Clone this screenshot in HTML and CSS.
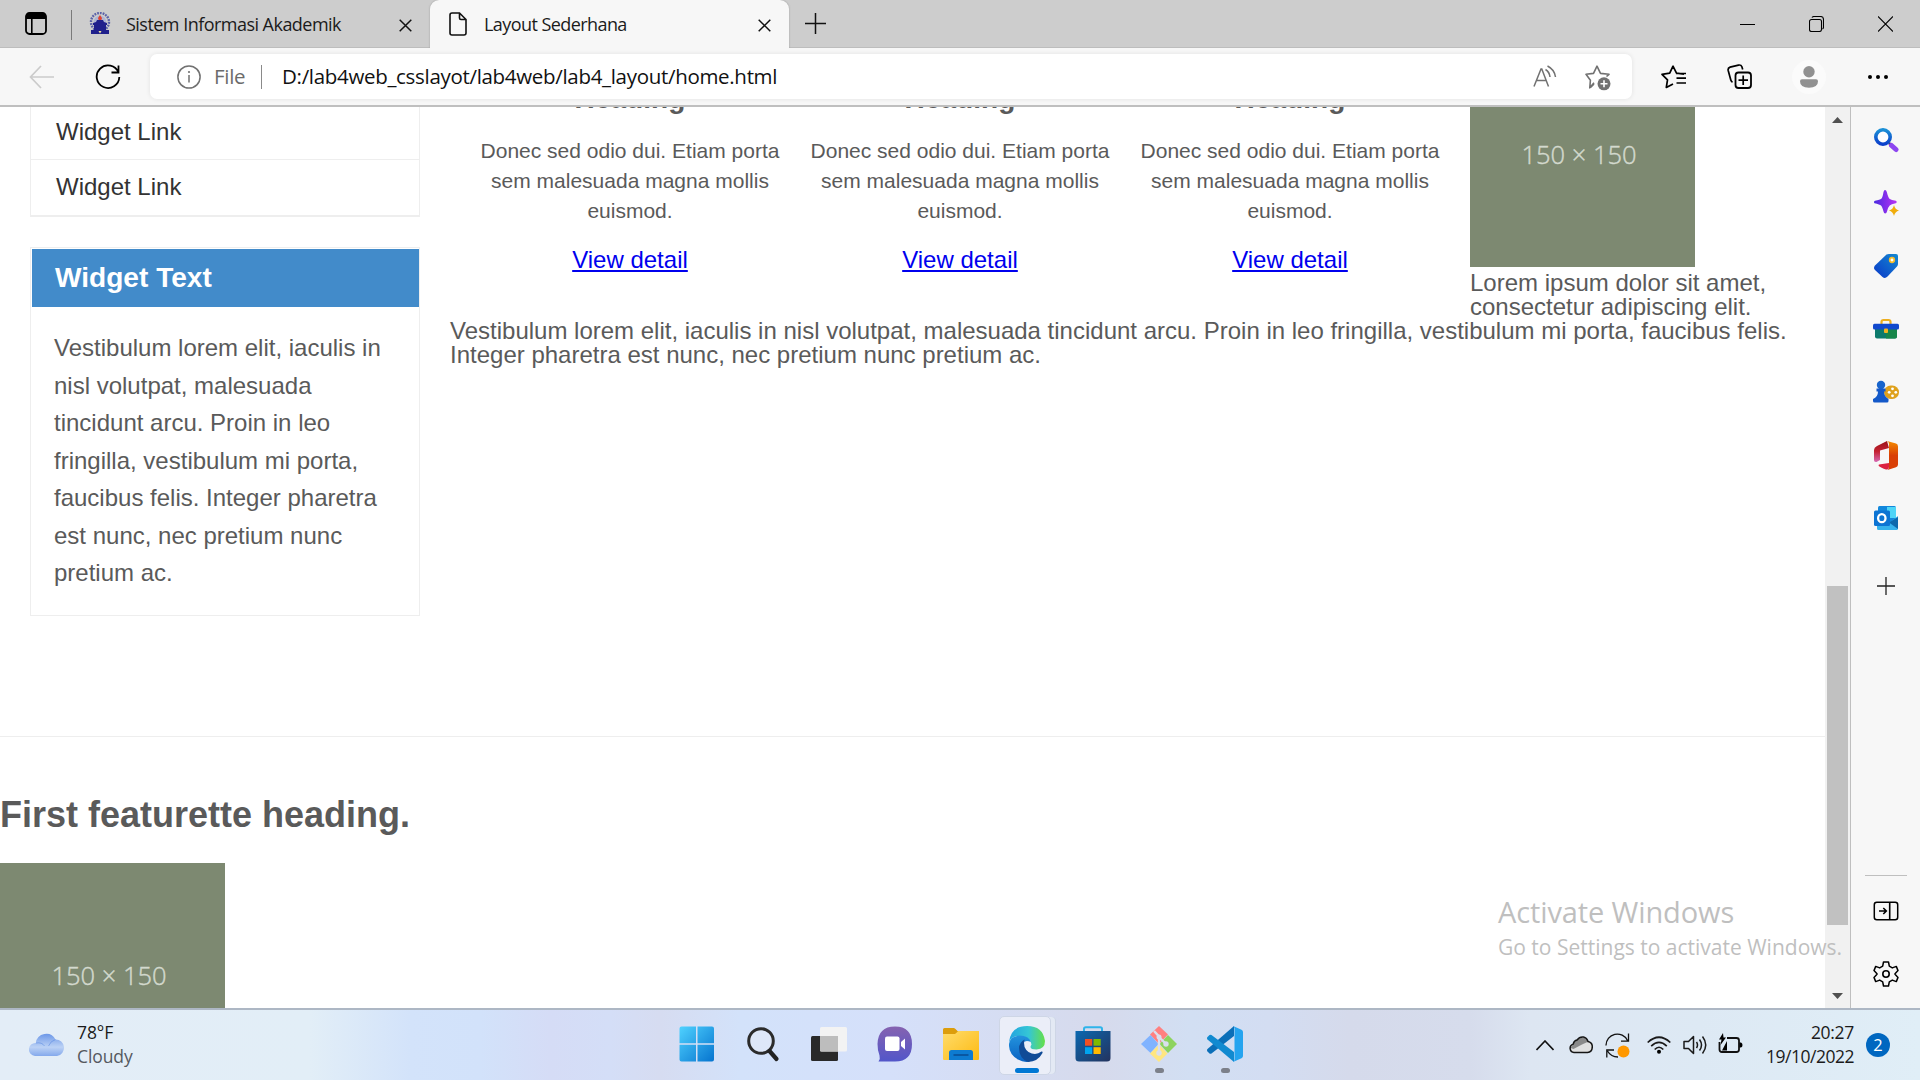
FILE: index.html
```html
<!DOCTYPE html>
<html lang="id">
<head>
<meta charset="utf-8">
<title>Layout Sederhana</title>
<link rel="stylesheet" href="styles.css">
</head>
<body>
<header class="titlebar">
  <svg class="tab-menu" width="22" height="23" viewBox="0 0 22 23"><rect x="1" y="1" width="20" height="21" rx="3.5" fill="none" stroke="#000" stroke-width="1.8"/><path d="M1 7V4a3 3 0 0 1 3-3h14a3 3 0 0 1 3 3v3zM6 7h1.6v15H6z"/></svg>
  <span class="title-rule"></span>
  <div class="tab">
    <svg class="favicon" width="22" height="23" viewBox="0 0 22 23"><circle cx="11" cy="10" r="9" fill="none" stroke="#5a62a8" stroke-width="2.4" stroke-dasharray="1.8 1"/><circle cx="11" cy="10" r="6.3" fill="#aeb4d4"/><path d="M11 3l2 3-1 3h-2L9 6z" fill="#e0412f"/><path d="M4 11l3-1 1-2h6l1 2 3 1v2h-1v5h3v4H2v-4h3v-5H4z" fill="#20208c"/><path d="M9.5 19h3L11 21.500z" fill="#f5e9a0"/></svg>
    <span class="ui tab-title t1">Sistem Informasi Akademik</span>
    <svg class="x" width="13" height="13" viewBox="0 0 13 13"><path d="M.7.7l11.600 11.600M12.300.7L.7 12.300" stroke="#111" stroke-width="1.5"/></svg>
  </div>
  <div class="tab active">
    <svg class="doc" width="18" height="24" viewBox="0 0 18 24"><path d="M3 1h7.500L17 7.500V21a2 2 0 0 1-2 2H3a2 2 0 0 1-2-2V3a2 2 0 0 1 2-2zM10.500 1v5a1.500 1.500 0 0 0 1.500 1.500h5" fill="none" stroke="#111" stroke-width="1.6"/></svg>
    <span class="ui tab-title t2">Layout Sederhana</span>
    <svg class="x" width="13" height="13" viewBox="0 0 13 13"><path d="M.7.7l11.600 11.600M12.300.7L.7 12.300" stroke="#111" stroke-width="1.5"/></svg>
  </div>
  <svg class="new-tab" width="21" height="21" viewBox="0 0 21 21"><path d="M10.500 0v21M0 10.500h21" stroke="#111" stroke-width="1.5"/></svg>
  <div class="win-controls">
    <svg width="15" height="16" viewBox="0 0 15 16"><path d="M0 8.500h15" stroke="#000"/></svg>
    <svg width="15" height="16" viewBox="0 0 15 16"><path d="M2.500 3.500h8a2 2 0 0 1 2 2v8a2 2 0 0 1-2 2h-8a2 2 0 0 1-2-2v-8a2 2 0 0 1 2-2zM3 1.500Q3.500.5 5 .5h6.500q3 0 3 3V11q0 1.500-1 2" fill="none" stroke="#000" stroke-width="1.1"/></svg>
    <svg width="15" height="16" viewBox="0 0 15 16"><path d="M0 .5l15 15M15 .5l-15 15" stroke="#000" stroke-width="1.1"/></svg>
  </div>
</header>

<nav class="toolbar">
  <svg class="back" width="25" height="24" viewBox="0 0 25 24"><path d="M12 1L1.500 12 12 23M1.500 12H25" fill="none" stroke="#cbcbcb" stroke-width="1.7"/></svg>
  <svg class="reload" width="26" height="26" viewBox="0 0 26 26"><path d="M23.500 8.500A11.300 11.300 0 1 0 24.300 13M23.500 1.500v7h-7" fill="none" stroke="#000" stroke-width="1.8"/></svg>
  <div class="address">
    <svg class="info" width="24" height="24" viewBox="0 0 24 24"><circle cx="12" cy="12" r="11.100" fill="none" stroke="#717171" stroke-width="1.5"/><path d="M12 10v7.500" stroke="#717171" stroke-width="1.5"/><circle cx="12" cy="7" r="1.100" fill="#717171"/></svg>
    <span class="ui file-label">File</span>
    <span class="address-rule"></span>
    <span class="ui url">D:/lab4web_csslayot/lab4web/lab4_layout/home.html</span>
    <svg class="read" width="24" height="23" viewBox="0 0 24 23"><path d="M1 21.500L8 4h.8l6.700 17.500M3.500 15.500h9.700M12.500 4.500q4 2.500 4.500 7.500M14.500 1q7 3.500 8 11" fill="none" stroke="#717171" stroke-width="1.5"/></svg>
    <svg class="star" width="26" height="26" viewBox="0 0 26 26"><path d="M9 17.800l-4.200 5 .6-7.600L1 9.300l7.500-.9L12 1.200l3.500 7.200 8.500.9-2.500 2.200M9 19l-3.500 3.500" fill="none" stroke="#717171" stroke-width="1.600" stroke-linejoin="round"/><circle cx="19" cy="18.800" r="6.500" fill="#717171"/><path d="M19 15.300v7M15.500 18.800h7" stroke="#fff" stroke-width="1.600"/></svg>
  </div>
  <svg class="favs" width="25" height="24" viewBox="0 0 25 24"><path d="M23 9.200l-7.500-1L12 1.200 8.700 8.200 1 9.300l5.500 5.500-1.200 7.700 6.700-3.600M15 8.500h10M15.500 13.200H25M15.500 18H25" fill="none" stroke="#000" stroke-width="1.700" stroke-linejoin="round"/></svg>
  <svg class="collect" width="25" height="25" viewBox="0 0 25 25"><rect x="8.500" y="8.500" width="15.500" height="15.500" rx="3" fill="none" stroke="#000" stroke-width="1.8"/><path d="M16.200 11.500v9.500M11.500 16.200H21M5.500 18.200q-1.300-.7-1.700-2.200L1.200 6.500q-.6-2.600 1.900-3.400l8.400-2q2.500-.5 3.400 1.700l.8 2.700" fill="none" stroke="#000" stroke-width="1.700"/></svg>
  <span class="avatar"><svg width="18" height="22" viewBox="0 0 18 22"><circle cx="9" cy="5.700" r="5.700" fill="#919191"/><path d="M2 13.300h14a2 2 0 0 1 2 2q0 6.400-9 6.400t-9-6.400a2 2 0 0 1 2-2z" fill="#919191"/></svg></span>
  <svg class="dots" width="20" height="4" viewBox="0 0 20 4"><circle cx="2" cy="2" r="2"/><circle cx="10" cy="2" r="2"/><circle cx="18" cy="2" r="2"/></svg>
</nav>

<div class="workspace">
  <main class="viewport">
    <div class="page-row">
      <aside class="sidebar">
        <ul class="widget-links"><li>Widget Link</li><li>Widget Link</li></ul>
        <section class="widget">
          <h3>Widget Text</h3>
          <p>Vestibulum lorem elit, iaculis in nisl volutpat, malesuada tincidunt arcu. Proin in leo fringilla, vestibulum mi porta, faucibus felis. Integer pharetra est nunc, nec pretium nunc pretium ac.</p>
        </section>
      </aside>
      <div class="content">
        <div class="boxes">
          <div class="box"><h3>Heading</h3><p>Donec sed odio dui. Etiam porta sem malesuada magna mollis euismod.</p><a href="#">View detail</a></div>
          <div class="box"><h3>Heading</h3><p>Donec sed odio dui. Etiam porta sem malesuada magna mollis euismod.</p><a href="#">View detail</a></div>
          <div class="box"><h3>Heading</h3><p>Donec sed odio dui. Etiam porta sem malesuada magna mollis euismod.</p><a href="#">View detail</a></div>
          <div class="figure"><div class="thumb">150 × 150</div><p>Lorem ipsum dolor sit amet, consectetur adipiscing elit.</p></div>
        </div>
        <p class="copy">Vestibulum lorem elit, iaculis in nisl volutpat, malesuada tincidunt arcu. Proin in leo fringilla, vestibulum mi porta, faucibus felis. Integer pharetra est nunc, nec pretium nunc pretium ac.</p>
      </div>
    </div>
    <section class="featurette">
      <h2>First featurette heading.</h2>
      <div class="thumb">150 × 150</div>
    </section>
  </main>
  <div class="scrollbar">
    <svg width="11" height="6" viewBox="0 0 11 6"><path d="M0 6L5.500 0 11 6z" fill="#505050"/></svg>
    <span class="thumb-bar"></span>
    <svg width="11" height="6" viewBox="0 0 11 6"><path d="M0 0h11L5.500 6z" fill="#505050"/></svg>
  </div>
  <aside class="edge-bar">
    <svg viewBox="0 0 26 26"><defs><linearGradient id="gs" x2="0" y2="1"><stop stop-color="#1b8fd6"/><stop offset="1" stop-color="#0b3fcb"/></linearGradient></defs><path d="M16 16l3 3" stroke="#444" stroke-width="2.500"/><path d="M18.500 18.500l4.500 4" stroke="#8d46f0" stroke-width="5" stroke-linecap="round"/><circle cx="10" cy="10" r="7.200" fill="#fdfdff" stroke="url(#gs)" stroke-width="3.600"/></svg>
    <svg viewBox="0 0 26 26"><defs><linearGradient id="gp"><stop stop-color="#4a2be0"/><stop offset="1" stop-color="#b833f5"/></linearGradient></defs><path d="M12 0q1.300 0 1.800 2 1.500 6 3 7t6 1.800q.9.400.9 1.200t-1 1.200q-4.500 1-6 2.300t-2.700 6q-.5 2-1.800 2t-1.700-2q-1.300-5-2.500-6t-6.500-2.200Q1 13 1 12t1-1.200q5-.8 6.300-2T10.500 2Q11 0 12 0z" fill="url(#gp)"/><path d="M21 15q1 4.500 5 5.500-4 1-5 5.500-1-4.500-5-5.500 4-1 5-5.500z" fill="#f0ad0c"/></svg>
    <svg viewBox="0 0 26 26"><defs><linearGradient id="gt" x1="0" y1="1" x2="1" y2="0"><stop stop-color="#0a38c9"/><stop offset="1" stop-color="#1489d0"/></linearGradient></defs><path d="M13.500 1.500Q14.500 1 16 1h7q2 0 2 2v8q0 1-1 2.500l-9.500 10Q12 26 9.500 24l-7.500-7q-2-2 0-4.500z" fill="url(#gt)"/><circle cx="19" cy="7" r="2.300" fill="#fff" stroke="#f5bd2b" stroke-width="1.700"/></svg>
    <svg viewBox="0 0 26 26"><path d="M8.500 9V6Q8.500 4 10.500 4h5q2 0 2 2v3" fill="none" stroke="#edae1e" stroke-width="2.200"/><path d="M2 12h22v8.500q0 2-2 2H4q-2 0-2-2z" fill="#0c7a6c"/><path d="M13 12h11v8.500q0 2-2 2h-9z" fill="#16864a"/><rect y="7.800" width="26" height="5.700" rx="1.500" fill="#1149cd"/><rect x="11" y="12.500" width="4" height="4.500" rx="1" fill="#f3b320"/></svg>
    <svg viewBox="0 0 26 26"><rect x="11" y="6.500" width="15" height="13.500" rx="6.700" fill="#dfa11c"/><circle cx="8" cy="6" r="4.200" fill="#1864cc"/><path d="M3.500 9.500h9v3H11q0 5 4.500 7.500v2q0 1.500-1.500 1.500H1.500Q0 23.500 0 22v-2q5-2 5-7.500H3.500z" fill="#1459c9"/><g fill="#fff"><circle cx="19.500" cy="9.800" r="1.400"/><circle cx="22.800" cy="13.300" r="1.400"/><circle cx="19.500" cy="16.800" r="1.400"/><circle cx="16.200" cy="13.300" r="1.400"/></g></svg>
    <svg class="tall" viewBox="0 0 24 29"><defs><linearGradient id="go" x2="0" y2="1"><stop stop-color="#f48b00"/><stop offset=".5" stop-color="#d93f06"/></linearGradient><linearGradient id="gq" x2="0" y2="1"><stop stop-color="#9b1218"/><stop offset=".5" stop-color="#c52232"/><stop offset="1" stop-color="#d66bb5"/></linearGradient></defs><path d="M13 0L3 5Q0 6.500 0 9v10q0 2.500 2.500 2L6 19V9.500L15 7z" fill="url(#gq)"/><path d="M13 0l9 2.500q2 .7 2 3v18q0 2-2 2.700L13.500 29q1.500-1 1.500-3V3q0-2-2-3z" fill="url(#go)"/><path d="M5 23.500l10-1.500v4q0 3-3 2.500-1 0-7-3.300-1-.9 0-1.700z" fill="#dc2240"/></svg>
    <svg viewBox="0 0 26 26"><rect x="5" y="1" width="18" height="22" rx="1.500" fill="#1287dc"/><path d="M14 2h9v11h-9z" fill="#4fd5f7"/><path d="M25 11v12.500q0 1.500-1.500 1.500H5.500Q4 25 4 23.500V18h12z" fill="#35b2ed"/><path d="M16 17.500L25 12v12z" fill="#0d68ad"/><rect x="1" y="5.500" width="16" height="15.500" rx="1.500" fill="#0d74d3"/><ellipse cx="8.800" cy="13.200" rx="3.700" ry="4" fill="none" stroke="#fff" stroke-width="2.300"/></svg>
    <svg class="add" width="18" height="18" viewBox="0 0 18 18"><path d="M9 0v18M0 9h18" stroke="#222" stroke-width="1.300"/></svg>
    <span class="edge-rule"></span>
    <svg viewBox="0 0 26 26"><rect x="1.300" y="4.300" width="23.400" height="17.400" rx="2.500" fill="none" stroke="#000" stroke-width="1.500"/><path d="M16.700 4v18M6 13h7M10.300 10l3 3-3 3" fill="none" stroke="#000" stroke-width="1.600"/></svg>
    <svg class="gear" viewBox="0 0 26 26"><path d="M10.500 1h5l.8 4.200 3 1.700 4-1.500L25 9.600 22 12.700v.6l3 3.100-1.700 4.200-4-1.500-3 1.700-.8 4.200h-5l-.8-4.200-3-1.700-4 1.500L1 16.400l3-3.100v-.6L1 9.600l1.700-4.200 4 1.500 3-1.700z" fill="none" stroke="#000" stroke-width="1.500" stroke-linejoin="round"/><circle cx="13" cy="13" r="3.200" fill="none" stroke="#000" stroke-width="1.600"/></svg>
  </aside>
  <div class="watermark"><span class="ui wm1">Activate Windows</span><span class="ui wm2">Go to Settings to activate Windows.</span></div>
</div>

<footer class="taskbar">
  <div class="weather">
    <svg width="36" height="24" viewBox="0 0 36 24"><defs><linearGradient id="gc" x2="0" y2="1"><stop stop-color="#6d98e8"/><stop offset=".6" stop-color="#bcd2f5"/><stop offset="1" stop-color="#84a9ec"/></linearGradient></defs><path d="M6 23a6.500 6.500 0 0 1 .8-13A10.500 10.500 0 0 1 26.500 6.500 8.300 8.300 0 0 1 28 23z" fill="url(#gc)"/><path d="M7 10q6-1 8.500 3M19.500 13q2-5 7-6.500" fill="none" stroke="#5f8de2" stroke-width="1" opacity=".6"/></svg>
    <div class="weather-text"><span class="ui w1">78°F</span><span class="ui w2">Cloudy</span></div>
  </div>
  <div class="apps">
    <span class="app"><svg viewBox="0 0 36 36"><defs><linearGradient id="gw" x2="1" y2="1"><stop stop-color="#4fd2ff"/><stop offset="1" stop-color="#0674cf"/></linearGradient></defs><path d="M2.500.5H17v16.800H.5V2.500a2 2 0 0 1 2-2zM18.500.5H33a2 2 0 0 1 2 2v14.800H18.500zM.5 18.700H17v16.800H2.500a2 2 0 0 1-2-2zM18.500 18.700H35v14.800a2 2 0 0 1-2 2H18.500z" fill="url(#gw)"/></svg></span>
    <span class="app"><svg viewBox="0 0 36 36"><circle cx="16" cy="15" r="12.300" fill="#e4ebf6" fill-opacity=".6" stroke="#2b2b2b" stroke-width="3"/><path d="M24.500 25l7 8" stroke="#222" stroke-width="4.200" stroke-linecap="round"/></svg></span>
    <span class="app"><svg viewBox="0 0 36 36"><rect y="10" width="27" height="25" rx="1.500" fill="#292929"/><rect x="9" y="1" width="27" height="24.500" rx="1.500" fill="#f3f3f3"/><path d="M9 10h18v15.500H10.500A1.500 1.500 0 0 1 9 24z" fill="#bdbdbd"/></svg></span>
    <span class="app"><svg viewBox="0 0 36 36"><defs><linearGradient id="gm" x2="0" y2="1"><stop stop-color="#8562b0"/><stop offset="1" stop-color="#5256c9"/></linearGradient></defs><path d="M18 .5q17 0 17 17.500T18 35.500H1.500q2-2.500 1-6Q.5 25 .5 18 1 .5 18 .5z" fill="url(#gm)"/><rect x="8" y="10.500" width="14.500" height="14.500" rx="2" fill="#fff"/><path d="M24 16l4-3.500v11L24 20z" fill="#fff"/></svg></span>
    <span class="app"><svg viewBox="0 0 36 36"><defs><linearGradient id="gf" x2="1" y2="1"><stop stop-color="#ffdc6b"/><stop offset="1" stop-color="#fdba12"/></linearGradient></defs><path d="M0 8V3.500q0-1.500 1.500-1.500h9q1 0 2 1l2.500 2.500H36V9z" fill="#dc9d0c"/><path d="M0 8h12l3.500-3H36v28q0 1-1 1H1q-1 0-1-1z" fill="url(#gf)"/><path d="M6 34V26.500Q6 24 8.500 24h19q2.500 0 2.500 2.500V34z" fill="#0d7bd1"/><path d="M10.500 29h15" stroke="#0a549c" stroke-width="1.800"/></svg></span>
    <span class="app current"><svg viewBox="0 0 36 36"><defs><linearGradient id="ge1"><stop stop-color="#22a3e0"/><stop offset=".55" stop-color="#35c6d5"/><stop offset="1" stop-color="#66e048"/></linearGradient><linearGradient id="ge2" x2="0" y2="1"><stop stop-color="#2393dd"/><stop offset="1" stop-color="#0a62c2"/></linearGradient></defs><path d="M0 16Q2 0 18 0t18 15q0 8-8.500 8.500-6 0-6-2.500 0-1 1-2.500Q22 11 11 10 3 10 0 16z" fill="url(#ge1)"/><path d="M0 18Q1 10 10.500 9.500 20 9.500 22 16q-6-3-9 2-3 9 8 17.500-6 1.500-12-2Q-.5 28 0 18z" fill="url(#ge2)"/><path d="M10 22q0-5 5.500-8.500-2 8 4 12.500 7 4 13-.4Q34 25 33.500 27 29 35.500 19 36 10 32 10 22z" fill="#104b97"/></svg><i></i></span>
    <span class="app"><svg viewBox="0 0 36 36"><defs><linearGradient id="gst" x2="1" y2="1"><stop stop-color="#0b68b0"/><stop offset="1" stop-color="#24335e"/></linearGradient></defs><path d="M9 7V3q0-1.800 1.800-1.800h14.400Q27 1.200 27 3v4" fill="none" stroke="#2fb4ea" stroke-width="2"/><path d="M.5 5h35v27q0 3.500-3.500 3.500H4Q.5 35.500.5 32z" fill="url(#gst)"/><path d="M10 13h7.200v6.700H10z" fill="#f25022"/><path d="M18.500 13h7.200v6.700h-7.200z" fill="#7fba00"/><path d="M10 21.200h7.200V28H10z" fill="#00a4ef"/><path d="M18.500 21.200h7.200V28h-7.200z" fill="#ffb900"/></svg></span>
    <span class="app open"><svg viewBox="0 0 36 36"><path d="M18 0l9 8.500-9 9.500-9-9.500z" fill="#ff8080"/><path d="M9.500 9l8 9-8 9L0 18z" fill="#80b3ff"/><path d="M27 9l9 9-9 9-8.500-9z" fill="#8dd35f"/><path d="M18 18.500l8.500 9L18 36l-9-8.500z" fill="#ffe680"/><path d="M13 5l5 5.500V28M18 11l7 7" fill="none" stroke="#dadfee" stroke-width="2.400"/><circle cx="18" cy="11" r="2.500" fill="#dadfee"/><circle cx="25" cy="18" r="2.700" fill="#dadfee"/><circle cx="18" cy="27" r="2.700" fill="#dadfee"/></svg><i></i></span>
    <span class="app open"><svg viewBox="0 0 36 36"><path d="M27 0v10L4.500 27.500q-1 .5-2 0L.5 25.500q-1-1.500 0-2.500z" fill="#0b6fb8"/><path d="M27 36V26L4.500 9q-1-.5-2 0l-2 2q-1 1.200 0 2.500z" fill="#118ad0"/><path d="M26 0l8.500 3.700Q36 4.500 36 6v24q0 1.500-1.500 2.300L26 36q1.500-1 1.500-2.500v-31Q27.500 1 26 0z" fill="#25a4ef"/></svg><i></i></span>
  </div>
  <div class="tray">
    <svg class="chev" width="18" height="11" viewBox="0 0 18 11"><path d="M.5 10L9 1l8.500 9" fill="none" stroke="#111" stroke-width="1.600"/></svg>
    <svg class="cloud" width="24" height="18" viewBox="0 0 24 18"><path d="M5 16.500a4.300 4.300 0 0 1-.8-8.400Q5 4.500 8 4q2.500-3.500 6.500-3 3.500.8 4.500 4.500 4.200.8 4.300 5 0 5.500-4.800 6z" fill="#e0e0e0"/><path d="M4.500 8.300Q5 4.800 8 4.300q2.500-3 6.300-2.600Q17.500 2.500 18.500 6L13 8.500l-8.500 4.500-3-1z" fill="#8a8a8a"/><path d="M5 16.500a4.300 4.300 0 0 1-.8-8.400Q5 4.500 8 4q2.500-3.500 6.500-3 3.500.8 4.500 4.500 4.200.8 4.300 5 0 5.500-4.800 6z" fill="none" stroke="#151515" stroke-width="1.500"/></svg>
    <svg class="sync" width="25" height="25" viewBox="0 0 25 25"><path d="M1 12.500A11.300 11.300 0 0 1 22.500 7.500M23.500.5v7.700h-7.500M9 17H1.800v7.500M2.500 18Q6 24 13 24" fill="none" stroke="#111" stroke-width="1.300"/><circle cx="18.500" cy="18.500" r="6" fill="#ff9800"/></svg>
    <svg class="wifi" width="24" height="18" viewBox="0 0 24 18"><path d="M.7 6.500q11.300-10.500 22.600 0M4.200 10.200q7.800-7.500 15.600 0M7.700 13.500q4.300-4.500 8.600 0" fill="none" stroke="#1a1a1a" stroke-width="1.700"/><circle cx="12" cy="15.800" r="2"/></svg>
    <svg class="sound" width="24" height="20" viewBox="0 0 24 20"><path d="M1 6.500h4.500l5-5v17l-5-5H1zM13.500 7q2 3 0 6M16.500 4.500q4 5.500 0 11M19.500 1.500q6.500 8.500 0 17" fill="none" stroke="#1a1a1a" stroke-width="1.500" stroke-linejoin="round"/></svg>
    <svg class="batt" width="25" height="21" viewBox="0 0 25 21"><path d="M9 5h9.500Q21 5 21 7.500v9q0 2.500-2.500 2.500H4q-2.500 0-2.500-2.500V9" fill="none" stroke="#111" stroke-width="1.800"/><path d="M21.500 9.500H23q1.500.5 1.500 2.500T23 14.500h-1.500zM5 0L1 6.500h2.500L2.500 12 8 4.500H5.500zM4 17.500l5-9.500v9.500z"/></svg>
    <div class="clock"><span class="ui c1">20:27</span><span class="ui c2">19/10/2022</span></div>
    <span class="ui badge">2</span>
  </div>
</footer>
</body>
</html>
```
FILE: styles.css
```css
* { box-sizing: border-box; margin: 0; padding: 0; }
body { width: 1920px; height: 1080px; overflow: hidden; display: flex; flex-direction: column; background: #fff; font-family: "Liberation Sans", Arial, sans-serif; font-size: 24px; line-height: 24px; color: #5a5a5a; }
svg { display: block; flex: none; }
.ui { font-family: "Open Sans", "Noto Sans", sans-serif; white-space: nowrap; }

.titlebar { height: 48px; flex: none; display: flex; align-items: center; background: #cdcdcd; border-bottom: 1px solid #bdbdbd; }
.tab-menu { margin-left: 25px; }
.title-rule { width: 1px; height: 30px; margin: 2px 0 0 24px; background: #7a7a7a; }
.tab { width: 358px; height: 48px; display: flex; align-items: center; color: #1b1b1b; font-size: 18px; padding: 0 18px 1px 17px; margin-bottom: -1px; }
.tab.active { width: 359px; background: #f7f7f7; border-radius: 9px 9px 0 0; padding: 0 18px 1px 19px; box-shadow: 0 0 2px #999; clip-path: inset(0 -3px 0 -3px); }
.tab .x { margin-left: auto; margin-top: 3px; }
.tab-title { margin-left: 15px; letter-spacing: -.53px; }
.t2 { margin-left: 17px; letter-spacing: -.57px; }
.new-tab { margin-left: 16px; }
.win-controls { margin-left: auto; display: flex; gap: 54px; padding-right: 27px; }

.toolbar { height: 59px; flex: none; display: flex; align-items: center; background: #f7f7f7; border-bottom: 2px solid #bfbfbf; font-size: 20.5px; }
.back { margin-left: 29px; }
.reload { margin-left: 41px; }
.address { width: 1482px; height: 45px; margin-left: 29px; display: flex; align-items: center; background: #fff; border-radius: 7px; box-shadow: 0 0 5px rgba(0,0,0,.09); }
.info { margin-left: 27px; }
.file-label { margin: 0 0 2px 13px; width: 47px; color: #6b6b6b; letter-spacing: -.3px; }
.address-rule { width: 1px; height: 24px; background: #8a8a8a; }
.url { margin: 0 0 2px 20px; color: #111; letter-spacing: -.31px; }
.read { margin-left: auto; }
.star { margin: 2px 21px 0 28px; }
.favs { margin-left: 29px; }
.collect { margin-left: 41px; }
.avatar { width: 34px; height: 34px; margin-left: 40px; border-radius: 50%; background: #fbfbfb; display: grid; place-items: center; }
.dots { margin-left: 42px; }

.workspace { position: relative; height: 901px; flex: none; display: flex; }
.viewport { width: 1825px; overflow: hidden; }
.page-row { height: 629px; display: flex; }
.sidebar { width: 390px; margin-left: 30px; }
.widget-links { list-style: none; border: 1px solid #eee; border-top: 0; border-bottom-width: 2px; color: #333; }
.widget-links li { height: 53px; padding: 13px 0 0 25px; border-bottom: 1px solid #eee; }
.widget-links li:last-child { height: 55px; padding-top: 15px; border: 0; }
.widget { height: 369px; margin-top: 30px; border: 1px solid #eee; padding: 1px 0 0 1px; }
.widget h3 { height: 58px; padding: 0 0 0 23px; background: #428bca; color: #fff; font-size: 28.08px; line-height: 58px; }
.widget p { padding: 22px 22px 0; line-height: 37.5px; }
.content { width: 1375px; margin-left: 30px; }
.boxes { height: 212px; display: flex; margin-left: 15px; }
.box { width: 330px; margin-top: -22px; text-align: center; }
.box h3 { font-size: 28.08px; line-height: 28px; }
.box p { margin: 23px 15px 22px; font-size: 21px; line-height: 30px; }
.box a { display: inline-block; color: #00e; text-decoration: underline; }
.figure { width: 330px; margin: -65px 0 0 15px; }
.figure p { margin-top: 4px; }
.thumb { width: 225px; height: 225px; background: #7d8971; color: #d3d9ce; font: 300 25.5px/224px "Open Sans", sans-serif; text-align: center; padding-right: 7px; -webkit-text-stroke: .4px #d3d9ce; }
.featurette { border-top: 1px solid #eee; padding-top: 60px; }
.featurette h2 { height: 66px; font-size: 36px; line-height: 36px; }

.scrollbar { width: 25px; background: #f1f1f1; display: flex; flex-direction: column; align-items: center; padding: 10px 0 9px; }
.thumb-bar { width: 21px; height: 339px; margin: 463px 0 68px; background: #c1c1c1; }
.edge-bar { width: 70px; border-left: 1px solid #bfbfbf; background: #f7f7f7; display: flex; flex-direction: column; align-items: center; padding: 20px 0 0; }
.edge-bar svg { width: 26px; height: 26px; margin-bottom: 37px; }
.edge-bar svg.tall { width: 24px; height: 29px; margin: -1px 0 35px; }
.edge-bar svg.add { width: 18px; height: 18px; margin: 9px 0 280px; }
.edge-bar svg.gear { margin-bottom: 0; }
.edge-rule { flex: none; width: 42px; height: 1px; background: #bfbfbf; margin-bottom: 22px; }
.watermark { position: absolute; left: 1498px; top: 785px; display: flex; flex-direction: column; color: #bfbfbf; }
.wm1 { font-size: 29px; line-height: 40px; letter-spacing: -.12px; }
.wm2 { font-size: 21px; line-height: 30px; }

.taskbar { height: 72px; flex: none; border-top: 2px solid #adb7c4; display: flex; align-items: center; color: #1b1b1b; background: linear-gradient(90deg, #e3edf7 0, #e2eef7 310px, #d3e3fa 410px, #d2e2fa 480px, #d5dcf6 550px, #d4def7 610px, #d6dcf1 660px, #d3e2fa 740px, #d5e0fa 890px, #d6daec 1100px, #d2dff3 1190px, #d3ddf2 1270px, #d5daeb 1350px, #d6dcec 1470px, #dde6f2 1530px, #dde9f4 1700px, #e0eef7 1920px); }
.weather { width: 663.5px; display: flex; align-items: center; padding-left: 29px; }
.weather-text { margin: -2px 0 0 12px; display: flex; flex-direction: column; font-size: 17.5px; letter-spacing: -.1px; }
.w2 { color: #55595f; }
.apps { display: flex; }
.app { position: relative; width: 66.1px; height: 70px; display: grid; place-items: center; padding-bottom: 2px; }
.app svg { width: 36px; height: 36px; z-index: 1; }
.app i { position: absolute; bottom: 7px; left: 29px; width: 9px; height: 5px; border-radius: 3px; background: #7c808a; z-index: 1; }
.current::before { content: ""; position: absolute; left: 5px; top: 6px; width: 50px; height: 57px; border-radius: 5px; background: #ebeef8; border: 1px solid #ced6e6; box-shadow: 5px 0 0 -1px #e3e9f4, 6px 0 0 -1px #ced6e6; }
.app.current i { left: 21px; width: 24px; background: #0078d4; }
.tray { margin-left: auto; display: flex; align-items: center; padding-right: 30px; }
.cloud { margin-left: 15px; }
.sync { margin-left: 12px; }
.wifi { margin-left: 17px; }
.sound { margin-left: 12px; }
.batt { margin: -4px 0 0 11px; }
.clock { width: 111px; display: flex; flex-direction: column; align-items: flex-end; font-size: 17.5px; margin-top: -2px; }
.c1 { letter-spacing: -.3px; }
.c2 { letter-spacing: -.5px; }
.badge { width: 24px; height: 24px; margin-left: 12px; border-radius: 50%; background: #0067c0; color: #fff; font-size: 16.5px; line-height: 23px; text-align: center; }
```
